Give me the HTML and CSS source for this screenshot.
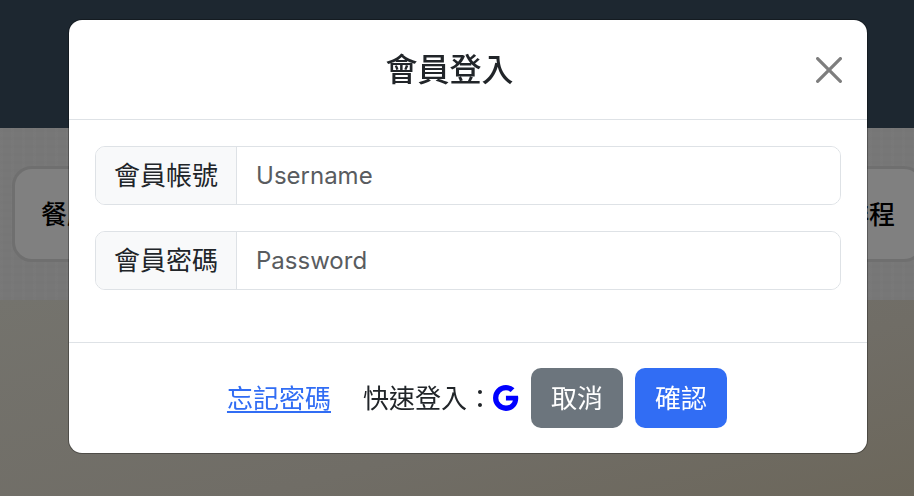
FILE: index.html
```html
<!DOCTYPE html>
<html lang="zh-Hant">
<head>
  <meta charset="utf-8">
  <meta name="viewport" content="width=device-width, initial-scale=1">
  <title>會員登入</title>
  <link rel="stylesheet" href="styles.css">
</head>
<body>
  <div class="page">
    <header class="topbar"></header>
    <div class="band">
      <nav class="tabs">
        <a class="tab" href="#restaurants">餐廳</a>
        <a class="tab" href="#schedule">排程</a>
      </nav>
    </div>
    <main class="hero"></main>
  </div>

  <div class="overlay">
    <form class="modal" role="dialog" aria-modal="true" aria-labelledby="login-title">
      <div class="modal-header">
        <h1 class="modal-title" id="login-title">會員登入</h1>
        <button class="close" type="button" aria-label="關閉">
          <svg class="close-icon" viewBox="0 0 16 16" aria-hidden="true">
            <path d="M.293.293a1 1 0 0 1 1.414 0L8 6.586 14.293.293a1 1 0 1 1 1.414 1.414L9.414 8l6.293 6.293a1 1 0 0 1-1.414 1.414L8 9.414l-6.293 6.293a1 1 0 0 1-1.414-1.414L6.586 8 .293 1.707a1 1 0 0 1 0-1.414z"/>
          </svg>
        </button>
      </div>
      <div class="modal-body">
        <div class="input-group">
          <label class="input-label" for="username">會員帳號</label>
          <input class="input" id="username" type="text" placeholder="Username">
        </div>
        <div class="input-group">
          <label class="input-label" for="password">會員密碼</label>
          <input class="input" id="password" type="password" placeholder="Password">
        </div>
      </div>
      <div class="modal-footer">
        <a class="forgot" href="#forgot">忘記密碼</a>
        <div class="quick">
          <span>快速登入：</span>
          <a class="google" href="#google" aria-label="Google">
            <svg class="google-icon" viewBox="3 3 18 18" aria-hidden="true">
              <path d="M20.283 10.356h-8.327v3.451h4.792c-.446 2.193-2.313 3.453-4.792 3.453a5.27 5.27 0 0 1-5.279-5.28 5.27 5.27 0 0 1 5.279-5.279c1.259 0 2.397.447 3.29 1.178l2.6-2.599c-1.584-1.381-3.615-2.233-5.89-2.233a8.908 8.908 0 0 0-8.934 8.934 8.907 8.907 0 0 0 8.934 8.934c4.467 0 8.529-3.249 8.529-8.934 0-.528-.081-1.097-.202-1.625z"/>
            </svg>
          </a>
        </div>
        <button class="btn btn-cancel" type="button">取消</button>
        <button class="btn btn-confirm" type="submit">確認</button>
      </div>
    </form>
  </div>
</body>
</html>
```
FILE: styles.css
```css
* {
  box-sizing: border-box;
}

body {
  margin: 0;
  overflow: hidden;
  color: #212529;
  font-family: Inter, "Noto Sans CJK TC", sans-serif;
  font-size: 26px;
  line-height: 38px;
}

.page {
  display: flex;
  flex-direction: column;
  min-height: 100vh;
}

.topbar {
  height: 128px;
  background: #1d2730;
}

.band {
  padding: 38px 0 38px 12px;
  background:
    repeating-linear-gradient(90deg, rgba(255, 255, 255, 0.01) 0 3px, transparent 3px 11px),
    repeating-linear-gradient(0deg, rgba(0, 0, 0, 0.01) 0 3px, transparent 3px 8px),
    #777;
}

.tabs {
  display: flex;
  justify-content: space-between;
  margin-right: -10px;
  padding: 27px 26px 25px;
  border: 3px solid #6f6f6f;
  border-radius: 20px;
  background: #808080;
}

.tab {
  color: #000;
  font-weight: 500;
  text-decoration: none;
}

.hero {
  flex: 1;
  background: linear-gradient(165deg, #74736d, #706d66 60%, #6c675b);
}

.overlay {
  position: fixed;
  inset: 0;
  padding: 20px 47px 20px 69px;
}

.modal {
  border-radius: 13px;
  background: #fff;
  box-shadow: 0 0 0 1px rgba(0, 0, 0, 0.3);
}

.modal-header {
  display: flex;
  align-items: center;
  padding: 24px 13px 23px 26px;
  border-bottom: 1px solid #dee2e6;
}

.modal-title {
  flex: 1;
  margin: 0;
  font-size: 32px;
  font-weight: 500;
  line-height: 52px;
  text-align: center;
}

.close {
  display: flex;
  padding: 12px;
  border: 0;
  background: none;
  color: #000;
  opacity: 0.5;
}

.close-icon {
  width: 26px;
  height: 26px;
  fill: currentColor;
}

.modal-body {
  display: flex;
  flex-direction: column;
  gap: 26px;
  padding: 26px 26px 52px;
}

.input-group {
  display: flex;
  border: 1px solid #dee2e6;
  border-radius: 10px;
  overflow: hidden;
}

.input-label {
  padding: 10px 18px 9px;
  border-right: 1px solid #dee2e6;
  background: #f8f9fa;
}

.input {
  flex: 1;
  min-width: 0;
  padding: 0 19px;
  border: 0;
  background: #fff;
  color: inherit;
  font: inherit;
  font-size: 24px;
}

.input::placeholder {
  color: #595c5f;
  opacity: 1;
}

.modal-footer {
  display: flex;
  align-items: center;
  justify-content: center;
  gap: 12px;
  padding: 25px 8px 25px 26px;
  border-top: 1px solid #dee2e6;
}

.forgot {
  padding-top: 2px;
  margin-right: 20px;
  color: #316df4;
  text-underline-offset: 3px;
}

.quick {
  display: flex;
  align-items: center;
  padding-top: 2px;
}

.google {
  display: flex;
  padding-bottom: 2px;
  color: #00f;
}

.google-icon {
  width: 26px;
  height: 26px;
  fill: currentColor;
}

.btn {
  padding: 12px 20px 10px;
  border: 0;
  border-radius: 10px;
  color: #fff;
  font: inherit;
}

.btn-cancel {
  background: #6c757d;
}

.btn-confirm {
  background: #316df4;
}
```
